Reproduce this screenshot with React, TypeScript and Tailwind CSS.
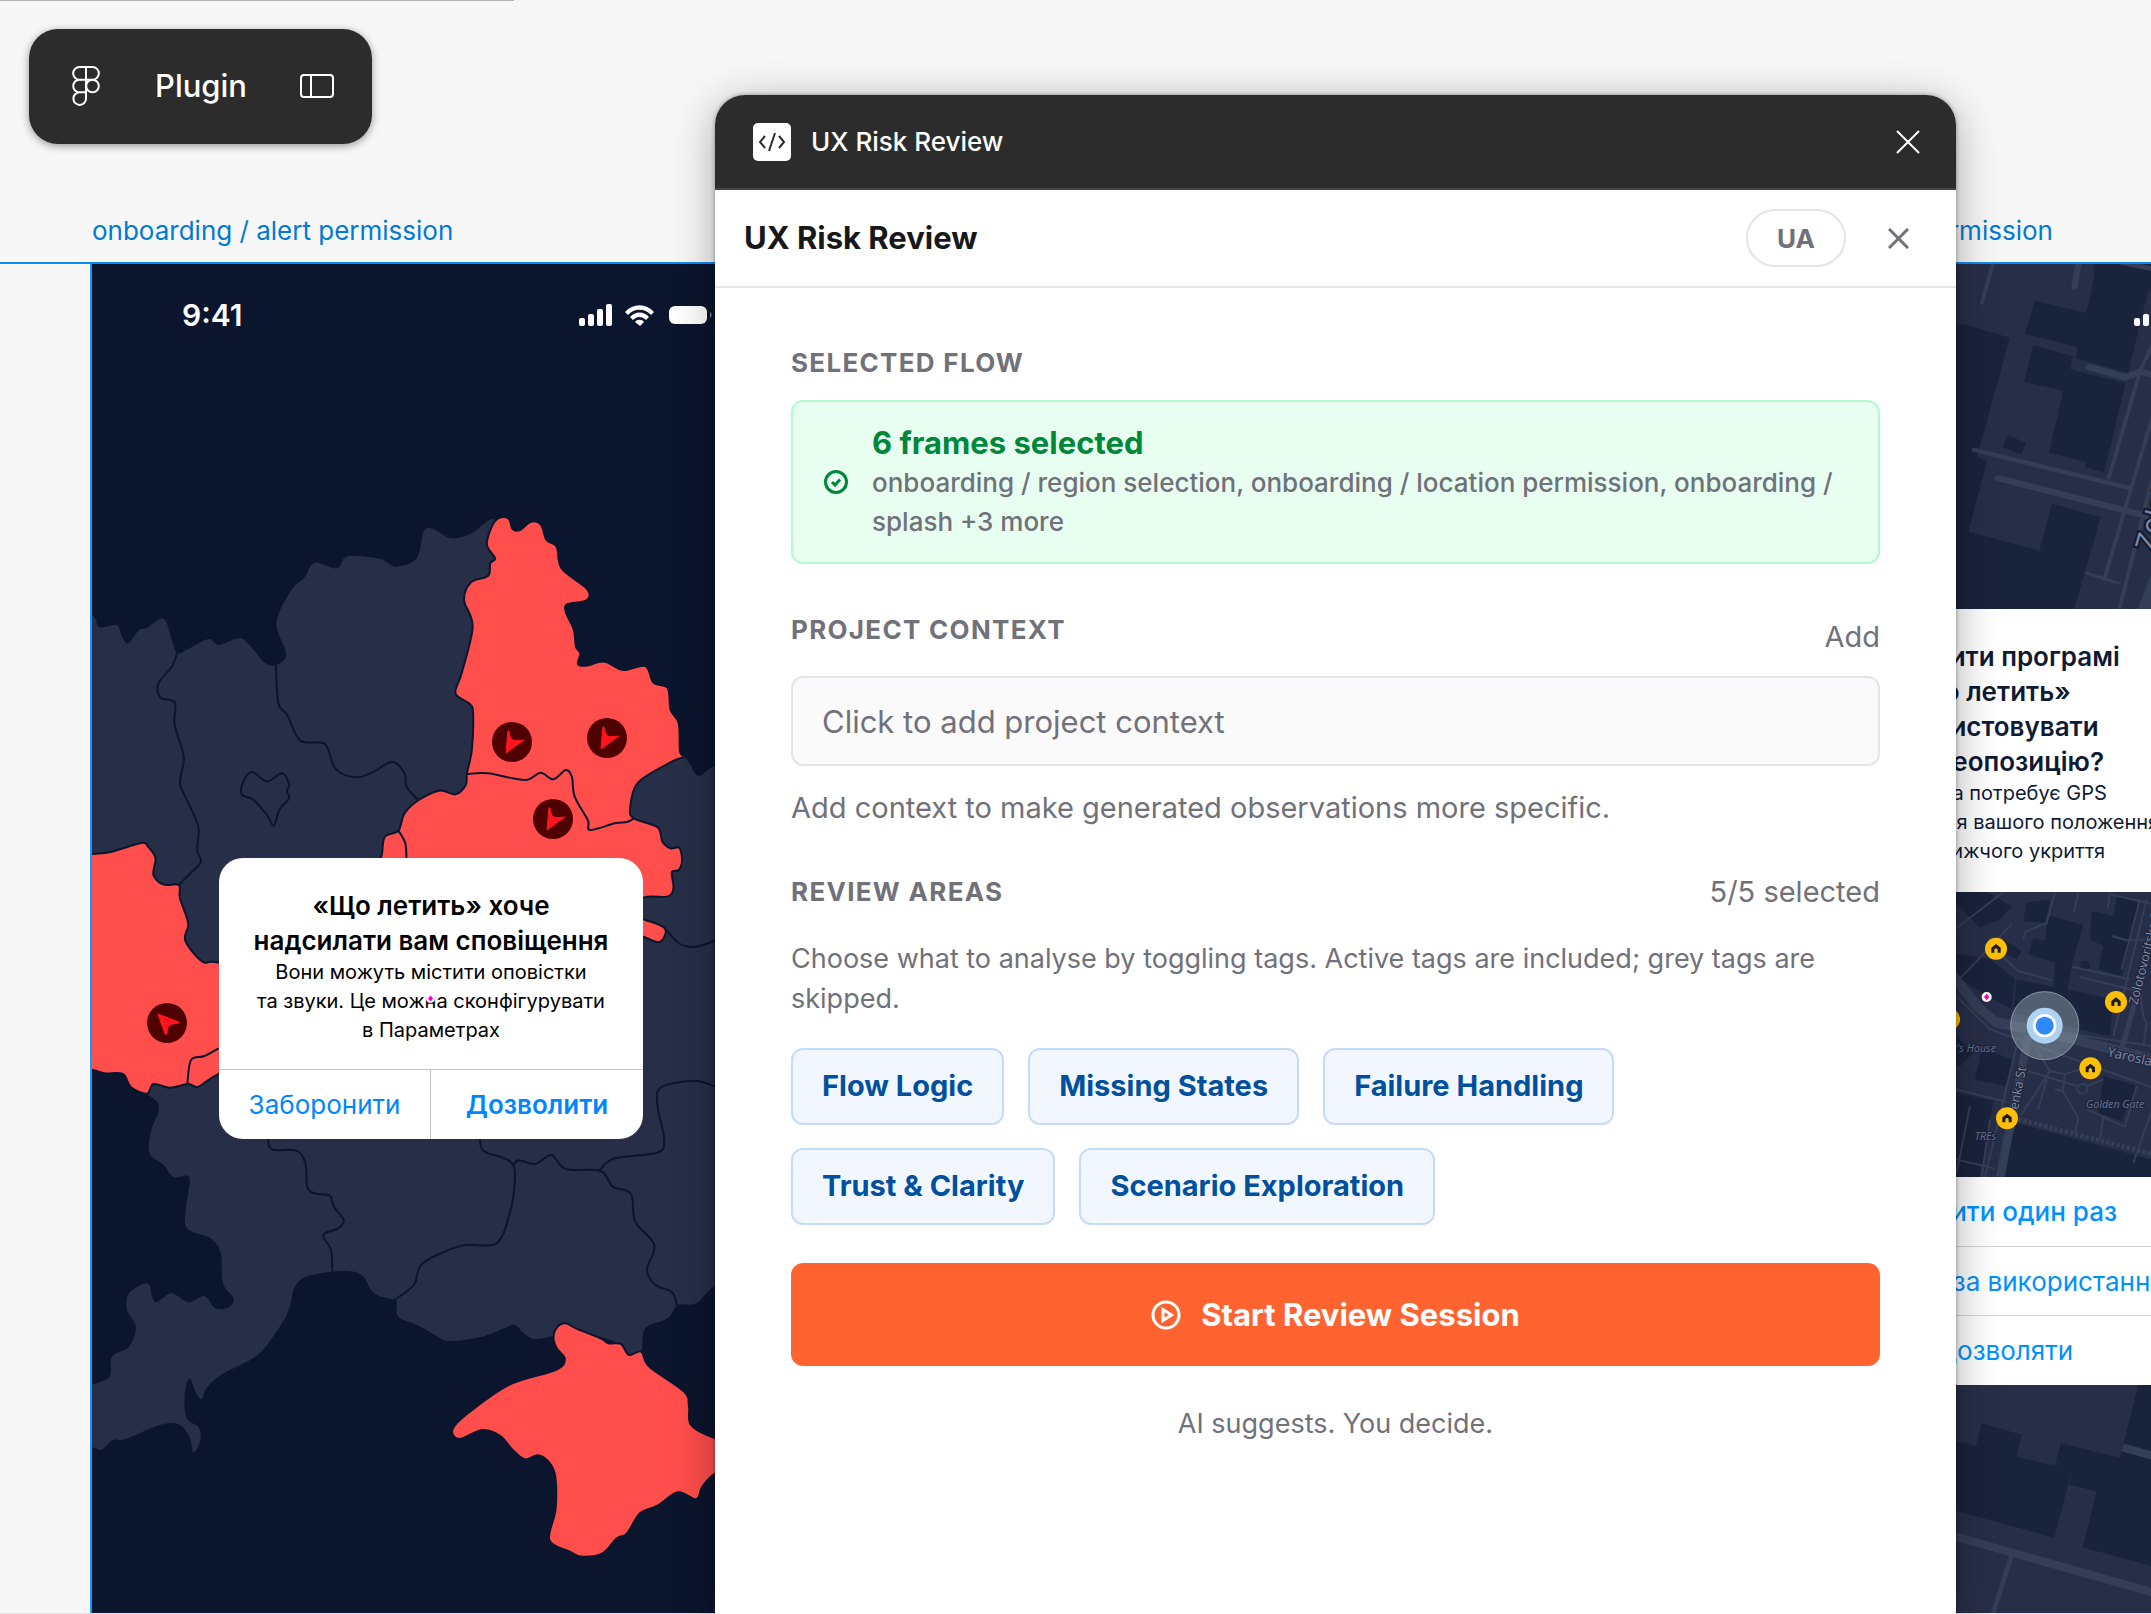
import { useState } from "react";

type Point = [number, number];

const LAND: Point[] = [
  [-30, 390], [30, 405], [48, 442], [90, 435], [103, 470], [118, 490], [145, 450], [165, 443], [205, 416], [225, 480], [238, 520],
  [265, 507], [315, 477], [340, 495], [390, 475], [415, 495], [455, 550], [485, 553], [505, 520], [481, 430], [515, 335], [550, 292],
  [575, 248], [630, 265], [655, 229], [735, 237], [775, 260], [825, 235], [842, 155], [865, 147], [910, 175], [960, 160], [1015, 118],
  [1060, 200], [1150, 600], [1400, 740], [1482, 832], [1515, 887], [1560, 855], [1700, 800], [1700, 2300], [1556, 2417], [1510, 2470],
  [1465, 2475], [1440, 2515], [1385, 2545], [1375, 2612], [1348, 2627], [1300, 2580], [1190, 2550], [1160, 2567], [1115, 2577],
  [1090, 2562], [1065, 2535], [1040, 2545], [985, 2570], [905, 2583], [870, 2565], [830, 2537], [780, 2510], [776, 2465], [765, 2458],
  [720, 2440], [690, 2385], [640, 2373], [555, 2390], [525, 2425], [510, 2495], [470, 2575], [430, 2630], [345, 2685], [310, 2725],
  [298, 2758], [285, 2740], [268, 2695], [256, 2750], [262, 2815], [290, 2842], [295, 2880], [278, 2918], [268, 2870], [240, 2832],
  [190, 2837], [110, 2878], [80, 2880], [52, 2910], [30, 2902], [-40, 2890], [-40, 2730], [30, 2713], [72, 2690], [78, 2630],
  [120, 2600], [137, 2540], [115, 2490], [120, 2440], [165, 2410], [178, 2455], [190, 2465], [225, 2440], [265, 2467], [305, 2448],
  [330, 2483], [360, 2485], [377, 2457], [350, 2410], [345, 2320], [320, 2275], [262, 2245], [260, 2180], [268, 2092], [230, 2092],
  [205, 2055], [170, 2020], [175, 1950], [193, 1890], [180, 1855], [125, 1820], [100, 1780], [30, 1770], [-30, 1760],
];

const RED_NORTH: Point[] = [
  [1025, 115], [1050, 115], [1060, 147], [1078, 150], [1105, 125], [1130, 135], [1143, 180], [1168, 200], [1180, 265], [1243, 328],
  [1240, 362], [1195, 372], [1190, 395], [1210, 450], [1215, 500], [1226, 520], [1220, 552], [1240, 557], [1285, 545], [1330, 570],
  [1385, 558], [1405, 608], [1440, 625], [1447, 690], [1467, 730], [1470, 815], [1480, 830], [1450, 845], [1367, 908], [1348, 985],
  [1357, 1015], [1415, 1042], [1427, 1085], [1447, 1105], [1468, 1103], [1475, 1140], [1467, 1170], [1450, 1177], [1454, 1225],
  [1438, 1250], [1380, 1253], [1300, 1300], [800, 1300], [730, 1200], [740, 1120], [747, 1070], [780, 1052], [795, 1000], [830, 960],
  [880, 932], [920, 943], [945, 915], [948, 880], [960, 810], [963, 700], [955, 672], [920, 640], [935, 580], [962, 440],
  [941, 360], [958, 307], [1000, 287], [1005, 250], [1017, 235], [997, 195], [1008, 142],
];

const RED_WEST: Point[] = [
  [-40, 1130], [30, 1122], [75, 1116], [150, 1089], [168, 1102], [185, 1135], [180, 1185], [205, 1214], [242, 1215], [245, 1255],
  [265, 1330], [258, 1382], [300, 1445], [340, 1448], [500, 1500], [500, 1700], [340, 1782], [290, 1820], [265, 1812], [220, 1823],
  [180, 1812], [164, 1841], [125, 1822], [105, 1782], [60, 1780], [30, 1770], [-40, 1760],
];

const RED_EAST: Point[] = [[1340, 1310], [1380, 1318], [1433, 1345], [1420, 1386], [1380, 1370], [1340, 1360]];

const CRIMEA: Point[] = [
  [1160, 2572], [1170, 2540], [1190, 2530], [1215, 2545], [1275, 2575], [1295, 2590], [1325, 2592], [1345, 2625], [1375, 2615],
  [1395, 2660], [1480, 2735], [1492, 2780], [1497, 2835], [1550, 2872], [1620, 2890], [1620, 2960], [1556, 2982], [1525, 3020],
  [1510, 3058], [1465, 3037], [1415, 3077], [1372, 3100], [1340, 3160], [1315, 3175], [1280, 3220], [1230, 3230], [1200, 3215],
  [1150, 3180], [1165, 3090], [1165, 2995], [1153, 2953], [1123, 2926], [1090, 2938], [1060, 2910], [1030, 2868], [985, 2850],
  [930, 2877], [912, 2850], [945, 2805], [1050, 2715], [1165, 2670], [1188, 2637], [1168, 2605],
];

const KYIV: Point[] = [
  [396, 942], [402, 900], [422, 876], [458, 904], [495, 880], [512, 912], [507, 935], [512, 955], [488, 990], [475, 1037],
  [458, 1005], [425, 960],
];

const BORDERS: Point[][] = [
  [[238, 520], [225, 560], [192, 610], [197, 653], [232, 668], [232, 735], [254, 830], [245, 910], [262, 960], [290, 1040], [287, 1110], [296, 1145], [270, 1180], [242, 1215]],
  [[480, 555], [486, 670], [508, 705], [540, 782], [600, 792], [625, 865], [675, 892], [720, 875], [765, 845], [795, 880], [800, 920], [828, 960]],
  [[948, 882], [1000, 880], [1090, 900], [1128, 878], [1160, 898], [1190, 870], [1205, 890], [1212, 950], [1244, 1020], [1250, 1050], [1310, 1030], [1340, 1026], [1357, 1015]],
  [[780, 1052], [797, 1090], [800, 1150]],
  [[340, 1705], [305, 1728], [272, 1740], [263, 1812]],
  [[460, 1970], [470, 2008], [530, 2012], [552, 2050], [557, 2120], [575, 2140], [612, 2147], [622, 2180], [646, 2220], [632, 2245], [596, 2265], [615, 2310], [618, 2375]],
  [[980, 1970], [988, 2012], [1040, 2035], [1062, 2056], [1065, 2110], [1054, 2195], [1020, 2290], [935, 2297], [840, 2350], [818, 2415], [770, 2460]],
  [[1062, 2056], [1075, 2041], [1115, 2052], [1155, 2025], [1190, 2067], [1275, 2073], [1305, 2120], [1350, 2142], [1360, 2225], [1407, 2295], [1389, 2370], [1410, 2415], [1450, 2436], [1463, 2477]],
  [[1272, 2072], [1310, 2035], [1415, 2018], [1431, 1975], [1415, 1880], [1424, 1822], [1510, 1803], [1570, 1828]],
  [[1433, 1345], [1470, 1392], [1510, 1400], [1570, 1375]],
];

// closed or open Catmull-Rom curve through the points
function smooth(points: Point[], closed = true) {
  const n = points.length;
  const at = (i: number) => (closed ? points[(i + n) % n] : points[Math.max(0, Math.min(n - 1, i))]);
  let d = `M${points[0][0]} ${points[0][1]}`;
  const last = closed ? n : n - 1;
  for (let i = 0; i < last; i++) {
    const [p0, p1, p2, p3] = [at(i - 1), at(i), at(i + 1), at(i + 2)];
    d += `C${p1[0] + (p2[0] - p0[0]) / 6} ${p1[1] + (p2[1] - p0[1]) / 6} ${p2[0] - (p3[0] - p1[0]) / 6} ${p2[1] - (p3[1] - p1[1]) / 6} ${p2[0]} ${p2[1]}`;
  }
  return closed ? d + "Z" : d;
}

function AlertMap() {
  return (
    <svg className="absolute left-0 top-0" width="678" height="1350" viewBox="92 264 678 1350" aria-hidden="true">
      <g transform="translate(80 480) scale(0.40816 0.33333)">
        <path d={smooth(LAND)} fill="#272e47" />
        <g fill="#ff4e4b" stroke="#0b152d" strokeWidth="2">
          <path d={smooth(RED_NORTH)} vectorEffect="non-scaling-stroke" />
          <path d={smooth(RED_WEST)} vectorEffect="non-scaling-stroke" />
          <path d={smooth(RED_EAST)} vectorEffect="non-scaling-stroke" />
          <path d={smooth(CRIMEA)} vectorEffect="non-scaling-stroke" />
        </g>
        <g fill="none" stroke="#0b152d" strokeWidth="2">
          <path d={smooth(KYIV)} vectorEffect="non-scaling-stroke" />
          {BORDERS.map((line, i) => (
            <path key={i} d={smooth(line, false)} vectorEffect="non-scaling-stroke" />
          ))}
        </g>
      </g>
      {[[512, 742], [607, 738], [553, 819]].map(([x, y]) => (
        <g key={x} transform={`translate(${x} ${y})`}>
          <circle r="20" fill="#4f0001" />
          <path d="M-3 -11Q-2 -3 1 -2Q3 -1 12 -2L-6 11L-4 -11Z" fill="#ff151b" stroke="#ff151b" strokeLinejoin="round" />
        </g>
      ))}
      <g transform="translate(167 1023)">
        <circle r="20" fill="#4f0001" />
        <path d="M-9 -9L12 -1L12 0Q3 1 2 3Q0 4 0 11L-2 11Z" fill="#ff151b" stroke="#ff151b" strokeLinejoin="round" />
      </g>
    </svg>
  );
}

function StreetMap() {
  return (
    <svg className="absolute left-0 top-0" width="678" height="1350" viewBox="1647 264 678 1350" aria-hidden="true">
      <rect x="1647" y="264" width="678" height="1350" fill="#272e47" />
      <g transform="translate(1400 80) scale(0.47893 0.33333)">
        <g fill="#1a233c">
          <path d="M1447 552H1640V660L1562 632L1520 878L1410 835L1415 800L1305 762L1325 662L1433 700L1450 590Z" />
          <path d="M1322 795L1405 828L1400 868L1515 910L1470 1178L1430 1160L1432 1145L1355 1118L1385 932L1303 905Z" />
          <path d="M1100 733H1177L1273 773L1205 1130L1225 1145L1187 1355L1335 1412L1362 1272L1463 1312L1405 1600H1100Z" />
          <path d="M1270 1065L1307 1090L1297 1125L1258 1100Z" />
        </g>
        <g fill="none" stroke="#353e57" strokeLinecap="round">
          <path d="M1240 540L1215 670M1620 640L1545 875L1480 1195M1600 870L1470 1500M1570 1200L1500 1600M1435 1480L1500 1510" strokeWidth="8" />
          <path d="M1418 540L1408 622M1200 1110L1525 1225" strokeWidth="13" />
          <path d="M1440 862L1515 892L1545 875L1620 900M1250 1195L1620 1330" strokeWidth="18" />
          <path d="M1620 1340L1550 1600" strokeWidth="26" />
          <path d="M1500 545L1600 575" strokeWidth="14" />
        </g>
      </g>
      <text
        className="font-[Inter,sans-serif] text-[28px]"
        transform="translate(2154 553) rotate(-74)"
        fill="#7c86a0"
        stroke="#11192f"
        strokeWidth="4"
        paintOrder="stroke"
      >
        Zolotovoritska St
      </text>
      <g transform="translate(1940 1170) scale(0.33333)">
        <g fill="#1a233c">
          <path d="M-400 700L48 814L108 828L125 760L245 794L230 860L396 900L343 1103L-400 900Z" />
          <path d="M362 820L540 864L596 640H900V1260L640 1190L428 1132L470 964L388 944L396 900L345 886Z" />
        </g>
        <g fill="none" stroke="#353e57">
          <path d="M-400 975L48 1100L640 1268L900 1340M548 832L700 875" strokeWidth="24" />
          <path d="M215 1155L150 1360" strokeWidth="14" />
        </g>
      </g>
    </svg>
  );
}

function NearbyMap() {
  return (
    <svg className="block w-full" viewBox="-498 38 1275 855" aria-hidden="true">
      <rect x="-498" y="38" width="1275" height="855" fill="#272e47" />
      <g fill="#1a233c">
        <path d="M48 38H140L215 80L180 120L120 145L48 70Z" />
        <path d="M260 70L330 60L315 130L250 125Z" />
        <path d="M325 108L430 138L400 238L380 340L340 320L345 250L265 225L280 175L315 185Z" />
        <path d="M455 95L520 110L530 50L600 70L545 290L475 270L490 200L450 180Z" />
        <path d="M-100 200L150 240L225 300L215 390L140 350L48 290Z" />
        <path d="M190 180L245 215L230 240L180 215Z" />
        <path d="M230 300L520 360L510 470L420 450L220 400Z" />
        <path d="M48 470L100 520L60 560L-100 560Z" />
        <path d="M125 510L220 540L195 620L105 600Z" />
        <path d="M48 640L160 665L120 893H-200V600Z" />
        <path d="M490 590L590 620L545 725L475 700Z" />
        <path d="M225 730L780 880V893H195Z" />
        <circle cx="435" cy="258" r="14" />
      </g>
      <g fill="none" stroke="#353e57" strokeWidth="6">
        <path d="M48 148L190 38M48 310L215 135M345 38L320 130L258 157L248 180M415 40L402 100M510 38L503 85M510 45L640 75" />
        <path d="M185 230L235 275L335 303M395 262L570 300M418 292L590 335M600 60L545 270M620 60L520 470M48 630L200 668M48 840L165 868M90 680L50 880" />
        <path d="M150 720L125 893M230 500L135 893M48 320L150 410L300 450L640 500M48 350L150 450L640 625M515 170L560 183L640 180M600 340L610 410L620 430L610 500" />
        <path d="M285 505L330 575L375 585L450 560M330 575L245 705M375 585L368 635L415 715L405 760M345 630L368 635M265 575L410 620M442 620L490 600M320 600L295 690M440 690L555 742L590 620M490 710L480 780M640 680L580 850" />
        <circle cx="427" cy="628" r="15" />
      </g>
      <g fill="none" stroke="#353e57" strokeLinejoin="round">
        <path d="M40 290L110 380L170 430L300 455L640 540" strokeWidth="30" />
        <path d="M265 470L180 893" strokeWidth="26" />
        <path d="M590 350L545 510" strokeWidth="16" />
        <path d="M235 720L640 825" strokeWidth="14" strokeDasharray="10 6" />
      </g>
      <g className="font-['Open_Sans',sans-serif]" fill="#68728c" stroke="#1a233c" strokeWidth="6" paintOrder="stroke">
        <text x="168" y="518" fontSize="32" fontStyle="italic" textAnchor="end">Golda Meir's House</text>
        <text x="438" y="686" fontSize="32" fontStyle="italic">Golden Gate</text>
        <text x="104" y="783" fontSize="32" fontStyle="italic">TREs</text>
        <g fill="#838da6">
          <text fontSize="40" transform="translate(500 530) rotate(13)">Yaroslaviv Val St</text>
          <text fontSize="38" transform="translate(234 692) rotate(-79)">enka St</text>
          <text fontSize="38" transform="translate(592 378) rotate(-76)">Zolotovoritska St</text>
        </g>
      </g>
      <circle cx="314" cy="439" r="102" fill="#9fb3bd" fillOpacity="0.42" stroke="#8b98a5" strokeWidth="3" />
      <circle cx="314" cy="439" r="54" fill="#b0d2f1" />
      <circle cx="314" cy="439" r="35" fill="#fff" />
      <circle cx="314" cy="439" r="27" fill="#3089fa" />
      {[[168, 208], [528, 368], [451, 567], [201, 717], [27, 420]].map(([x, y]) => (
        <g key={x} transform={`translate(${x} ${y})`}>
          <circle r="33" fill="#ffbf06" />
          <path d="M-14 -3L0 -14L14 -3V12H5V4A5 5 0 0 0 -5 4V12H-14Z" fill="#1a1d2b" />
        </g>
      ))}
      <circle cx="140" cy="353" r="15" fill="#fff" />
      <path d="M140 343L148 353L140 363L132 353Z" fill="#ff00b8" />
    </svg>
  );
}

function StatusBar() {
  return (
    <div className="relative flex items-center justify-between pl-[90px] pr-[56px] pt-[31px] text-white">
      <span className="text-[30px] font-semibold leading-10">9:41</span>
      <svg width="136" height="22" viewBox="0 0 136 22" fill="currentColor" aria-hidden="true">
        <rect x="1" y="14" width="6" height="8" rx="2" />
        <rect x="10" y="10" width="6" height="12" rx="2" />
        <rect x="19" y="5" width="6" height="17" rx="2" />
        <rect x="28" y="0" width="6" height="22" rx="2" />
        <path d="M47 8C55 -1 68 -1 76 8L73 11C67 4 56 4 50 11Z" />
        <path d="M52 13C57 7 66 7 71 13L68 16C64 12 59 12 55 16Z" />
        <path d="M57 18C59 15 64 15 66 18L62 22Z" />
        <rect x="91" y="2" width="38" height="18" rx="6" />
        <path d="M132 8C134 9 134 13 132 14Z" opacity="0.5" />
      </svg>
    </div>
  );
}

function FigmaIcon() {
  return (
    <svg width="28" height="40" viewBox="0 0 28 40" fill="none" stroke="#fff" strokeWidth="2" aria-hidden="true">
      <path d="M14 1H7.500A6.300 6.300 0 0 0 7.500 13.700H14ZM14 1H20.500A6.300 6.300 0 0 1 20.500 13.700H14ZM14 13.700H7.500A6.300 6.300 0 0 0 7.500 26.300H14ZM14 26.300H7.500A6.300 6.300 0 1 0 14 32.600Z" />
      <circle cx="20.500" cy="20" r="6.300" />
    </svg>
  );
}

function PluginWindow() {
  const areas = ["Flow Logic", "Missing States", "Failure Handling", "Trust & Clarity", "Scenario Exploration"];
  const [active, setActive] = useState(areas);

  const toggle = (area: string) =>
    setActive((prev) => (prev.includes(area) ? prev.filter((a) => a !== area) : [...prev, area]));

  return (
    <section className="absolute bottom-0 left-[715px] right-[195px] top-[95px] flex flex-col overflow-hidden rounded-t-[30px] bg-white shadow-[0_8px_44px_rgba(0,0,0,0.32),0_0_4px_rgba(0,0,0,0.35)]">
      <header className="flex h-[95px] shrink-0 items-center gap-5 border-b-2 border-[#444] bg-[#2c2c2c] pl-[38px] pr-9 pt-px text-white">
        <span className="flex size-[38px] items-center justify-center rounded-[5px] bg-white">
          <svg width="28" height="20" viewBox="0 0 28 20" fill="none" stroke="#2c2c2c" strokeWidth="2" aria-hidden="true">
            <path d="M7 4L2 10L7 16M21 4L26 10L21 16M17 1L11 19" />
          </svg>
        </span>
        <span className="text-[26px] font-medium leading-10">UX Risk Review</span>
        <button type="button" aria-label="Close plugin" className="ml-auto">
          <svg width="24" height="24" viewBox="0 0 24 24" stroke="currentColor" strokeWidth="2" aria-hidden="true">
            <path d="M1 1L23 23M23 1L1 23" />
          </svg>
        </button>
      </header>
      <div className="flex h-[98px] shrink-0 items-center border-b-2 border-[#e4e4ea] pl-[29px] pr-[47px]">
        <h1 className="text-[31px] font-bold leading-10 text-[#18181b]">UX Risk Review</h1>
        <button type="button" className="ml-auto h-[58px] w-[100px] rounded-full border-2 border-[#e4e4ea] text-[26px] font-bold text-[#71717a]">
          UA
        </button>
        <button type="button" aria-label="Close" className="ml-[42px] text-[#71717a]">
          <svg width="21" height="21" viewBox="0 0 21 21" stroke="currentColor" strokeWidth="3" aria-hidden="true">
            <path d="M1 1L20 20M20 1L1 20" />
          </svg>
        </button>
      </div>
      <div className="flex flex-col px-[76px] pt-[55px] text-[29px] leading-10 text-[#71717a]">
        <h2 className="text-[26px] font-bold tracking-wider">SELECTED FLOW</h2>
        <div className="mt-[17px] flex items-center gap-6 rounded-xl border-2 border-[#b3fbcf] bg-[#e7fef0] px-[31px] py-[21px]">
          <svg className="shrink-0" width="24" height="24" viewBox="0 0 24 24" fill="none" stroke="#00873a" strokeWidth="3" aria-hidden="true">
            <circle cx="12" cy="12" r="10.500" />
            <path d="M8 12L11 15L16 9.500" />
          </svg>
          <div>
            <p className="text-[31px] font-bold text-[#00873a]">6 frames selected</p>
            <p className="text-[26px] font-medium leading-[39px]">
              onboarding / region selection, onboarding / location permission, onboarding / splash +3 more
            </p>
          </div>
        </div>
        <div className="mt-[46px] flex h-[47px] justify-between">
          <label htmlFor="context" className="text-[26px] font-bold tracking-wider">PROJECT CONTEXT</label>
          <button type="button" className="self-end">Add</button>
        </div>
        <input
          id="context"
          placeholder="Click to add project context"
          className="mt-[19px] h-[90px] rounded-xl border-2 border-[#e4e4ea] bg-[#fafafa] px-[29px] text-[31px] placeholder:text-[#71717a]"
        />
        <p className="mt-[22px]">Add context to make generated observations more specific.</p>
        <div className="mt-[44px] flex justify-between">
          <h2 className="text-[26px] font-bold tracking-wider">REVIEW AREAS</h2>
          <span>{active.length}/{areas.length} selected</span>
        </div>
        <p className="mt-[27px] text-[27px]">
          Choose what to analyse by toggling tags. Active tags are included; grey tags are skipped.
        </p>
        <div className="mt-[29px] flex flex-wrap gap-x-6 gap-y-[23px]">
          {areas.map((area) => (
            <button
              key={area}
              type="button"
              aria-pressed={active.includes(area)}
              onClick={() => toggle(area)}
              className="h-[77px] rounded-xl border-2 border-[#c5dbfa] bg-[#f2f7ff] px-[29px] pb-[2px] font-bold text-[#00509d] aria-[pressed=false]:border-[#e4e4ea] aria-[pressed=false]:bg-[#fafafa] aria-[pressed=false]:text-[#71717a]"
            >
              {area}
            </button>
          ))}
        </div>
        <button type="button" className="mt-[38px] flex h-[103px] items-center justify-center gap-5 rounded-xl bg-[#ff6430] text-[31px] font-bold text-white">
          <svg width="30" height="30" viewBox="0 0 30 30" fill="none" stroke="currentColor" strokeWidth="3" aria-hidden="true">
            <circle cx="15" cy="15" r="13" />
            <path d="M12 9.500L20.500 15L12 20.500Z" />
          </svg>
          Start Review Session
        </button>
        <p className="mt-[38px] text-center text-[27px]">AI suggests. You decide.</p>
      </div>
    </section>
  );
}

export default function App() {
  return (
    <main className="relative h-screen overflow-hidden bg-[#f7f7f7] font-[Inter,sans-serif]">
      <div className="absolute left-0 top-0 h-px w-[514px] bg-[#b5b5b5]" />

      <div className="absolute left-[90px] top-[211px] w-[680px]">
        <p className="h-[51px] pl-[2px] text-[26px] leading-10 text-[#007ad2]">onboarding / alert permission</p>
        <div className="relative mt-[2px] h-[1350px] border-l-2 border-[#0d99ff] bg-[#0b152d]">
          <AlertMap />
          <StatusBar />
          <div className="relative mx-auto mt-[523px] w-[424px] overflow-hidden rounded-[24px] bg-white text-center text-black">
            <div className="px-4 pb-[24px] pt-[30px]">
              <h2 className="text-[26px] font-semibold leading-[35px]">
                «Що летить» хоче<br />надсилати вам сповіщення
              </h2>
              <p className="text-[20px] leading-[29px]">
                Вони можуть містити оповістки<br />та звуки. Це можна сконфігурувати<br />в Параметрах
              </p>
            </div>
            <div className="grid h-[70px] grid-cols-2 divide-x divide-[#c4c4c6] border-t border-[#c4c4c6] text-[26px] text-[#0086ff]">
              <button type="button">Заборонити</button>
              <button type="button" className="font-semibold">Дозволити</button>
            </div>
            <svg className="absolute left-[207px] top-[136px]" width="9" height="9" viewBox="0 0 9 9" aria-hidden="true">
              <circle cx="4.500" cy="4.500" r="4.500" fill="#fff" />
              <path d="M4.500 1.500L7 4.500L4.500 7.500L2 4.500Z" fill="#ff00b8" />
            </svg>
          </div>
        </div>
      </div>

      <div className="absolute left-[1645px] top-[211px] w-[680px]">
        <p className="h-[51px] pl-[4px] text-[26px] leading-10 text-[#007ad2]">onboarding / location permission</p>
        <div className="relative mt-[2px] h-[1350px] border-l-2 border-[#0d99ff]">
          <StreetMap />
          <StatusBar />
          <div className="relative mx-auto mt-[274px] w-[425px] bg-white text-center text-[#0f1a33]">
            <div className="px-2 pb-[26px] pt-[30px]">
              <h2 className="text-[26px] font-semibold leading-[35px]">
                Дозволити програмі<br />«Що летить»<br />використовувати<br />вашу геопозицію?
              </h2>
              <p className="whitespace-nowrap text-[20px] leading-[29px]">
                Програма потребує GPS<br />для визначення вашого положення<br />та найближчого укриття
              </p>
            </div>
            <NearbyMap />
            <div className="flex flex-col divide-y divide-[#d4d4d4] whitespace-nowrap text-[26px] text-[#0091ff]">
              <button type="button" className="h-[70px] font-medium">Дозволити один раз</button>
              <button type="button" className="h-[69px]">Дозволити за використання</button>
              <button type="button" className="h-[69px]">Не дозволяти</button>
            </div>
          </div>
        </div>
      </div>

      <div className="absolute left-0 right-0 top-[262px] h-[2px] bg-[#0d8bf0]" />
      <div className="absolute bottom-0 left-0 right-0 h-px bg-[#e6e6e6]" />

      <nav className="absolute left-[29px] top-[29px] flex h-[115px] w-[343px] items-center rounded-[29px] bg-[#2c2c2c] pb-[2px] pl-[43px] pr-[38px] text-white shadow-[0_2px_8px_rgba(0,0,0,0.4)]">
        <button type="button" aria-label="Main menu">
          <FigmaIcon />
        </button>
        <span className="ml-[55px] text-[31px] font-medium leading-10">Plugin</span>
        <button type="button" aria-label="Toggle sidebar" className="ml-auto">
          <svg width="34" height="26" viewBox="0 0 34 26" fill="none" stroke="currentColor" strokeWidth="2" aria-hidden="true">
            <rect x="1" y="2" width="32" height="22" rx="3" />
            <path d="M11 2V24" />
          </svg>
        </button>
      </nav>

      <PluginWindow />
    </main>
  );
}
